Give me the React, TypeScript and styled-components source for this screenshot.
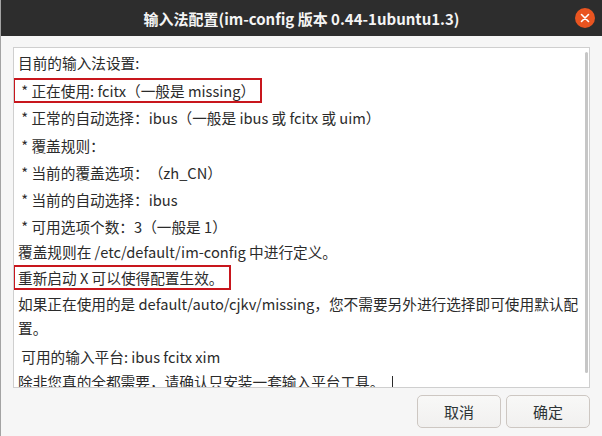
import React from "react";
import styled, { createGlobalStyle } from "styled-components";

const Global = createGlobalStyle`
  html, body {
    margin: 0;
    padding: 0;
    background: #f6f6f6;
  }
  body {
    font-family: "Noto Sans CJK SC", "Noto Sans", sans-serif;
  }
`;

const Window = styled.div`
  width: 602px;
  height: 436px;
  display: flex;
  flex-direction: column;
  background: #f6f6f6;
  border-left: 1px solid #a3a3a3;
  box-sizing: border-box;
  overflow: hidden;
`;

const TitleBar = styled.div`
  height: 36px;
  flex: none;
  background: #2d2d2d;
  display: grid;
  grid-template-columns: 1fr auto 1fr;
  align-items: center;
`;

const Title = styled.div`
  grid-column: 2;
  color: #f4f4f4;
  font-size: 15px;
  font-weight: 700;
  white-space: nowrap;
`;

const CloseButton = styled.div`
  grid-column: 3;
  justify-self: end;
  margin-right: 7px;
  width: 20px;
  height: 20px;
  border-radius: 50%;
  background: #e95420;
  display: flex;
  align-items: center;
  justify-content: center;
`;

const Body = styled.div`
  flex: 1;
  display: flex;
  flex-direction: column;
  padding: 11px 12px 0 12px;
`;

const TextBox = styled.div`
  position: relative;
  height: 341px;
  box-sizing: border-box;
  background: #ffffff;
  border: 1px solid #cfcfcf;
  overflow: hidden;
  padding: 3px 0 0 4px;
  color: #2b2b2b;
  font-size: 14.67px;
  text-spacing-trim: space-all;
`;

const Scroll = styled.div`
  position: absolute;
  top: 4px;
  right: 1px;
  width: 3px;
  height: 321px;
  background: #c6c6c6;
  border-radius: 2px;
`;

const Line = styled.div<{ $gap?: number; $marked?: boolean }>`
  height: 24px;
  line-height: 24px;
  white-space: pre;
  margin-top: ${(p) => p.$gap ?? 0}px;
  ${(p) =>
    p.$marked
      ? `
    display: table;
    height: 21px;
    line-height: 21px;
    margin-left: -5px;
    padding: 0 5px 0 3px;
    border: 2px solid #c8161d;
  `
      : ""}
`;

const Caret = styled.span`
  display: inline-block;
  width: 1px;
  height: 17px;
  background: #2b2b2b;
  vertical-align: middle;
  margin-left: 8px;
`;

const Footer = styled.div`
  display: flex;
  justify-content: flex-end;
  gap: 5px;
  padding-top: 7px;
`;

const Button = styled.div`
  width: 84px;
  height: 33px;
  box-sizing: border-box;
  border: 1px solid #cdc7c2;
  border-radius: 5px;
  background: linear-gradient(#f8f8f7, #f1f0ef);
  display: flex;
  align-items: center;
  justify-content: center;
  font-size: 15px;
  color: #2e3436;
`;

export default function App() {
  return (
    <Window>
      <Global />
      <TitleBar>
        <Title>输入法配置(im-config 版本 0.44-1ubuntu1.3)</Title>
        <CloseButton>
          <svg width="10" height="10" viewBox="0 0 10 10">
            <path d="M1.5 1.5 L8.5 8.5 M8.5 1.5 L1.5 8.5" stroke="#fff" strokeWidth="1.6" strokeLinecap="round" />
          </svg>
        </CloseButton>
      </TitleBar>
      <Body>
        <TextBox>
          <Line>目前的输入法设置:</Line>
          <Line $gap={3} $marked>{" * 正在使用: fcitx（一般是 missing）"}</Line>
          <Line $gap={3}>{" * 正常的自动选择：ibus（一般是 ibus 或 fcitx 或 uim）"}</Line>
          <Line $gap={4}>{" * 覆盖规则："}</Line>
          <Line $gap={3}>{" * 当前的覆盖选项：（zh_CN）"}</Line>
          <Line $gap={3}>{" * 当前的自动选择：ibus"}</Line>
          <Line $gap={3}>{" * 可用选项个数：3（一般是 1）"}</Line>
          <Line $gap={1}>覆盖规则在 /etc/default/im-config 中进行定义。</Line>
          <Line $gap={1} $marked>重新启动 X 可以使得配置生效。</Line>
          <Line $gap={2}>如果正在使用的是 default/auto/cjkv/missing，您不需要另外进行选择即可使用默认配</Line>
          <Line>置。</Line>
          <Line $gap={5}>{" 可用的输入平台: ibus fcitx xim"}</Line>
          <Line $gap={1}>
            除非您真的全都需要，请确认只安装一套输入平台工具。
            <Caret />
          </Line>
          <Scroll />
        </TextBox>
        <Footer>
          <Button>取消</Button>
          <Button>确定</Button>
        </Footer>
      </Body>
    </Window>
  );
}
